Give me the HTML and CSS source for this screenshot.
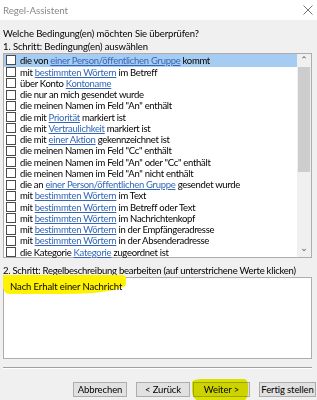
FILE: index.html
```html
<!DOCTYPE html>
<html lang="de">
<head>
    <meta charset="UTF-8">
    <title>Regel-Assistent</title>
    <link rel="stylesheet" href="styles.css">
</head>
<body>
    <div class="titlebar">
        <span class="title">Regel-Assistent</span>
        <svg class="close" width="10" height="10" viewBox="0 0 10 10"><path d="M0.5 0.5 L9.5 9.5 M9.5 0.5 L0.5 9.5" stroke="#777" stroke-width="1" fill="none"/></svg>
    </div>

    <div class="dialog">
        <p class="question">Welche Bedingung(en) möchten Sie überprüfen?</p>
        <p class="step">1. Schritt: Bedingung(en) auswählen</p>

        <div class="listbox">
            <ul class="conditions">
                <li class="selected"><span class="box"></span>die von <a>einer Person/öffentlichen Gruppe</a> kommt</li>
                <li><span class="box"></span>mit <a>bestimmten Wörtern</a> im Betreff</li>
                <li><span class="box"></span>über Konto <a>Kontoname</a></li>
                <li><span class="box"></span>die nur an mich gesendet wurde</li>
                <li><span class="box"></span>die meinen Namen im Feld "An" enthält</li>
                <li><span class="box"></span>die mit <a>Priorität</a> markiert ist</li>
                <li><span class="box"></span>die mit <a>Vertraulichkeit</a> markiert ist</li>
                <li><span class="box"></span>die mit <a>einer Aktion</a> gekennzeichnet ist</li>
                <li><span class="box"></span>die meinen Namen im Feld "Cc" enthält</li>
                <li><span class="box"></span>die meinen Namen im Feld "An" oder "Cc" enthält</li>
                <li><span class="box"></span>die meinen Namen im Feld "An" nicht enthält</li>
                <li><span class="box"></span>die an <a>einer Person/öffentlichen Gruppe</a> gesendet wurde</li>
                <li><span class="box"></span>mit <a>bestimmten Wörtern</a> im Text</li>
                <li><span class="box"></span>mit <a>bestimmten Wörtern</a> im Betreff oder Text</li>
                <li><span class="box"></span>mit <a>bestimmten Wörtern</a> im Nachrichtenkopf</li>
                <li><span class="box"></span>mit <a>bestimmten Wörtern</a> in der Empfängeradresse</li>
                <li><span class="box"></span>mit <a>bestimmten Wörtern</a> in der Absenderadresse</li>
                <li><span class="box"></span>die Kategorie <a>Kategorie</a> zugeordnet ist</li>
            </ul>
            <div class="scrollbar">
                <div class="arrow">&#8963;</div>
                <div class="thumb"></div>
                <div class="track"></div>
                <div class="arrow down">&#8964;</div>
            </div>
        </div>

        <p class="step step2">2. Schritt: Regelbeschreibung bearbeiten (auf unterstrichene Werte klicken)</p>
        <div class="description">
            <span class="marker"></span>
            <span class="desc-text">Nach Erhalt einer Nachricht</span>
        </div>

        <div class="separator"></div>

        <div class="buttons">
            <button class="btn">Abbrechen</button>
            <div class="pair">
                <button class="btn">&lt; Zurück</button>
                <button class="btn next">Weiter &gt;<span class="marker2"></span></button>
            </div>
            <button class="btn">Fertig stellen</button>
        </div>
    </div>
</body>
</html>
```

FILE: styles.css
```css
body {
    margin: 0;
    width: 317px;
    height: 400px;
    overflow: hidden;
    background: #f0f0f0;
    font-family: Lato, "Open Sans", sans-serif;
    font-size: 9.5px;
    letter-spacing: -0.1px;
    color: #000;
}

.titlebar {
    height: 20px;
    background: #fff;
    display: flex;
    align-items: center;
    justify-content: space-between;
    padding: 0 4px 0 3px;
}

.title {
    color: #8a8a8a;
    font-size: 9.8px;
}

.dialog {
    padding: 0 5px 0 3px;
}

.question,
.step {
    margin: 0;
    height: 13px;
    line-height: 13px;
    white-space: nowrap;
}

.question {
    margin-top: 7px;
}

.listbox {
    height: 203px;
    border: 1px solid #adadad;
    background: #fff;
    display: flex;
}

.conditions {
    list-style: none;
    margin: 0;
    padding: 0;
    flex: 1;
    letter-spacing: -0.3px;
}

.conditions li {
    height: 11.25px;
    line-height: 11px;
    display: flex;
    align-items: center;
    white-space: pre;
}

.conditions li.selected {
    height: 12.5px;
    background: #a6cdf1;
}

.conditions a {
    color: #3366b8;
    text-decoration: underline;
}

.box {
    width: 8px;
    height: 8px;
    border: 1px solid #4a4a4a;
    background: #fff;
    margin: 0 4px 0 2px;
    flex: none;
}

.scrollbar {
    width: 14px;
    display: flex;
    flex-direction: column;
    background: #f0f0f0;
}

.arrow {
    height: 13px;
    line-height: 13px;
    text-align: center;
    font-family: "DejaVu Sans", sans-serif;
    font-size: 9px;
    color: #555;
}

.arrow.down {
    line-height: 9px;
}

.thumb {
    height: 105px;
    margin: 0 1px;
    background: #cdcdcd;
}

.track {
    flex: 1;
}

.step2 {
    margin-top: 6px;
    letter-spacing: -0.25px;
}

.description {
    position: relative;
    height: 80px;
    border: 1px solid #adadad;
    background: #fff;
}

.marker {
    position: absolute;
    left: -1px;
    top: -3px;
    width: 123px;
    height: 19px;
    background: #fff200;
    border-radius: 0 4px 60px 6px / 0 4px 10px 8px;
}

.desc-text {
    position: relative;
    display: block;
    padding: 2px 0 0 6px;
    line-height: 13px;
}

.separator {
    margin-top: 8px;
    height: 1px;
    background: #a0a0a0;
    border-bottom: 1px solid #fff;
}

.buttons {
    margin-top: 13px;
    display: flex;
    justify-content: flex-end;
    gap: 9px;
    margin-right: -4px;
}

.pair {
    display: flex;
    gap: 3px;
}

.btn {
    position: relative;
    height: 15px;
    padding: 0;
    border: 1px solid #adadad;
    background: #e1e1e1;
    font-family: Lato, "Open Sans", sans-serif;
    font-size: 9.5px;
    letter-spacing: -0.1px;
    color: #000;
    width: 54px;
    line-height: 13px;
    white-space: nowrap;
}

.btn:last-child {
    width: 57px;
}

.marker2 {
    position: absolute;
    left: -2px;
    top: -4px;
    width: 56px;
    height: 22px;
    background: #e8f000;
    mix-blend-mode: multiply;
    border-radius: 10px 4px 6px 8px / 3px 6px 8px 10px;
}
```
